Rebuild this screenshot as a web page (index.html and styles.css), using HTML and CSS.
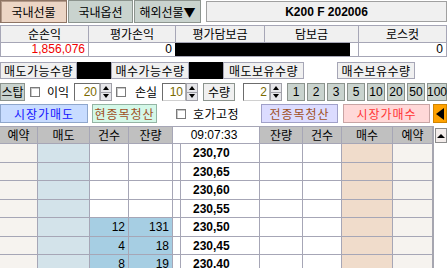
FILE: index.html
```html
<!DOCTYPE html>
<html lang="ko">
<head>
    <meta charset="UTF-8">
    <meta name="viewport" content="width=device-width, initial-scale=1.0">
    <title>선물 주문</title>
    <link rel="stylesheet" href="styles.css">
</head>
<body>

<div class="tabs">
    <div class="tab tab-on">국내선물</div>
    <div class="tab tab-off">국내옵션</div>
    <div class="tab tab-off tab-drop">해외선물▼</div>
    <div class="code">K200 F 202006</div>
</div>

<div class="summary">
    <div class="sh">순손익</div>
    <div class="sh">평가손익</div>
    <div class="sh">평가담보금</div>
    <div class="sh">담보금</div>
    <div class="sh">로스컷</div>
    <div class="sv loss">1,856,076</div>
    <div class="sv">0</div>
    <div class="sv masked"><span class="mask"></span></div>
    <div class="sv">0</div>
</div>

<div class="qtys">
    <div class="lbl lbl-a">매도가능수량</div>
    <div class="blk"></div>
    <div class="lbl lbl-b">매수가능수량</div>
    <div class="blk"></div>
    <div class="lbl lbl-c">매도보유수량</div>
    <div class="blank"></div>
    <div class="lbl lbl-d">매수보유수량</div>
</div>

<div class="opts">
    <div class="btn stop">스탑</div>
    <span class="chk chk-1"></span>
    <span class="opt-label">이익</span>
    <div class="spin spin-1">
        <span class="spin-val">20</span>
        <span class="spin-arr"><i class="up"></i><i class="down"></i></span>
    </div>
    <span class="chk chk-2"></span>
    <span class="opt-label loss-label">손실</span>
    <div class="spin spin-2">
        <span class="spin-val">10</span>
        <span class="spin-arr"><i class="up"></i><i class="down"></i></span>
    </div>
    <div class="btn qty-btn">수량</div>
    <div class="spin spin-3">
        <span class="spin-val">2</span>
        <span class="spin-arr"><i class="up"></i><i class="down"></i></span>
    </div>
    <div class="nums">
        <div class="btn num">1</div>
        <div class="btn num">2</div>
        <div class="btn num">3</div>
        <div class="btn num">5</div>
        <div class="btn num">10</div>
        <div class="btn num">20</div>
        <div class="btn num">50</div>
        <div class="btn num wide">100</div>
    </div>
</div>

<div class="orders">
    <div class="ord sell-mkt">시장가매도</div>
    <div class="ord clear-one">현종목청산</div>
    <span class="chk chk-3"></span>
    <span class="fix-label">호가고정</span>
    <div class="ord clear-all">전종목청산</div>
    <div class="ord buy-mkt">시장가매수</div>
    <div class="ord collapse"><i class="left"></i></div>
</div>

<div class="book">
    <div class="grid">
        <div class="hd">예약</div>
        <div class="hd">매도</div>
        <div class="hd">건수</div>
        <div class="hd">잔량</div>
        <div class="hd time">09:07:33</div>
        <div class="hd">잔량</div>
        <div class="hd">건수</div>
        <div class="hd">매수</div>
        <div class="hd">예약</div>

        <div class="c rs"></div><div class="c ask"></div><div class="c"></div><div class="c"></div><div class="c"></div><div class="c price">230,70</div><div class="c"></div><div class="c"></div><div class="c bid"></div><div class="c rs"></div>
        <div class="c rs"></div><div class="c ask"></div><div class="c"></div><div class="c"></div><div class="c"></div><div class="c price">230,65</div><div class="c"></div><div class="c"></div><div class="c bid"></div><div class="c rs"></div>
        <div class="c rs"></div><div class="c ask"></div><div class="c"></div><div class="c"></div><div class="c"></div><div class="c price">230,60</div><div class="c"></div><div class="c"></div><div class="c bid"></div><div class="c rs"></div>
        <div class="c rs"></div><div class="c ask"></div><div class="c"></div><div class="c"></div><div class="c"></div><div class="c price">230,55</div><div class="c"></div><div class="c"></div><div class="c bid"></div><div class="c rs"></div>
        <div class="c rs"></div><div class="c ask"></div><div class="c n hit">12</div><div class="c n hit">131</div><div class="c"></div><div class="c price">230,50</div><div class="c"></div><div class="c"></div><div class="c bid"></div><div class="c rs"></div>
        <div class="c rs"></div><div class="c ask"></div><div class="c n hit">4</div><div class="c n hit">18</div><div class="c"></div><div class="c price">230,45</div><div class="c"></div><div class="c"></div><div class="c bid"></div><div class="c rs"></div>
        <div class="c rs"></div><div class="c ask"></div><div class="c n hit">8</div><div class="c n hit">19</div><div class="c"></div><div class="c price">230,40</div><div class="c"></div><div class="c"></div><div class="c bid"></div><div class="c rs"></div>
    </div>
    <div class="scroll">
        <div class="scroll-up"><i class="up"></i></div>
    </div>
</div>

</body>
</html>
```

FILE: styles.css
```css
* {
    box-sizing: border-box;
}

body {
    margin: 0;
    width: 447px;
    height: 268px;
    overflow: hidden;
    background-color: #fff;
    font-family: "Noto Sans CJK KR", sans-serif;
    font-size: 12px;
    line-height: 14px;
    color: #000;
}

/* 상단 탭 */
.tabs {
    display: flex;
    height: 23px;
}

.tab {
    display: flex;
    align-items: center;
    justify-content: center;
    height: 23px;
    border: 1px solid #8c948e;
}

.tab-on {
    width: 67px;
    background-color: #ecd5c5;
    border-color: #8e7464;
    box-shadow: inset 1px 1px 0 #b39a8a;
}

.tab-off {
    width: 65px;
    margin-left: 1px;
    background-color: #c9d3ce;
}

.tab-drop {
    width: 67px;
    margin-left: 1px;
}

.code {
    flex: 1;
    margin-left: 5px;
    margin-top: 1px;
    height: 21px;
    display: flex;
    align-items: center;
    justify-content: center;
    background-color: #f0f0f0;
    border: 1px solid #a0a0a0;
    font-family: "Liberation Sans", sans-serif;
    font-weight: bold;
}

/* 손익 요약 */
.summary {
    margin-top: 2px;
    display: grid;
    grid-template-columns: 87px 86px 88px 93px 87px;
    grid-template-rows: 16px 13px;
    gap: 1px;
    padding: 1px;
    background-color: #a6a6b6;
}

.sh {
    background-color: #f0f0f0;
    text-align: center;
    line-height: 16px;
}

.sv {
    background-color: #fff;
    text-align: right;
    padding-right: 3px;
    font-family: "Liberation Sans", sans-serif;
    line-height: 13px;
}

.loss {
    color: #f00000;
}

.masked {
    grid-column: span 2;
    padding: 0;
    margin-left: -1px;
    text-align: left;
}

.mask {
    display: block;
    width: 175px;
    height: 13px;
    background-color: #000;
}

/* 수량 정보 */
.qtys {
    margin-top: 5px;
    display: flex;
    height: 17px;
}

.lbl {
    display: flex;
    align-items: center;
    justify-content: center;
    background-color: #f0f0f0;
    border: 1px solid #a6a6b6;
    letter-spacing: 0.5px;
}

.lbl-a { width: 77px; }
.lbl-b { width: 78px; }
.lbl-c { width: 81px; }
.lbl-d { width: 78px; }

.blk {
    width: 34px;
    background-color: #000;
}

.blank {
    width: 33px;
}

/* 스탑 옵션 */
.opts {
    margin-top: 4px;
    display: flex;
    align-items: center;
    height: 18px;
}

.btn {
    display: flex;
    align-items: center;
    justify-content: center;
    height: 18px;
    background-color: #c9d3ce;
    border: 1px solid #8c948e;
}

.stop {
    width: 25px;
}

.chk {
    width: 10px;
    height: 10px;
    background-color: #fff;
    border: 1px solid #7a7a7a;
    box-shadow: inset 1px 1px 0 #c8c8c8;
}

.chk-1 { margin-left: 5px; }
.chk-2 { margin-left: 4px; }

.opt-label {
    width: 27px;
    margin-left: 7px;
}

.loss-label {
    margin-left: 9px;
}

.spin {
    display: flex;
    height: 18px;
}

.spin-val {
    display: block;
    height: 18px;
    background-color: #fff;
    border: 1px solid #6c6c6c;
    border-right-color: #b0b0b0;
    border-bottom-color: #d0d0d0;
    text-align: right;
    padding-right: 2px;
    font-family: "Liberation Sans", sans-serif;
    line-height: 16px;
    color: #7a6a00;
}

.spin-1 .spin-val { width: 26px; }
.spin-2 .spin-val { width: 24px; }
.spin-3 .spin-val { width: 27px; }

.spin-3 {
    margin-left: 8px;
}

.spin-arr {
    display: flex;
    flex-direction: column;
    width: 12px;
    height: 18px;
    background-color: #e6e6ea;
    border: 1px solid #a0a0a8;
}

.spin-arr i {
    flex: 1;
    display: flex;
    align-items: center;
    justify-content: center;
}

.spin-arr i::before {
    content: "";
    border-left: 3px solid transparent;
    border-right: 3px solid transparent;
}

.spin-arr .up::before {
    border-bottom: 4px solid #000;
}

.spin-arr .down {
    border-top: 1px solid #a0a0a8;
}

.spin-arr .down::before {
    border-top: 4px solid #000;
}

.qty-btn {
    width: 32px;
    margin-left: 5px;
    background-color: #f0f0f0;
}

.nums {
    display: flex;
    gap: 2px;
    margin-left: 5px;
}

.num {
    width: 18px;
    font-family: "Liberation Sans", sans-serif;
}

.num.wide {
    width: 20px;
}

/* 주문 버튼 */
.orders {
    margin-top: 3px;
    display: flex;
    align-items: center;
    height: 19px;
}

.ord {
    display: flex;
    align-items: center;
    justify-content: center;
    height: 19px;
    border: 1px solid #9a9aa8;
    letter-spacing: 1px;
}

.sell-mkt {
    width: 88px;
    background-color: #c8dcff;
    border-color: #8ea6cc;
    color: #1414ff;
}

.clear-one {
    width: 65px;
    margin-left: 4px;
    background-color: #d4f8e8;
    border-color: #94b4a4;
    color: #a0501e;
}

.chk-3 {
    margin-left: 19px;
}

.fix-label {
    width: 68px;
    margin-left: 7px;
    letter-spacing: 0.5px;
}

.clear-all {
    width: 77px;
    background-color: #dcdcff;
    border-color: #a0a0c8;
    color: #a0501e;
}

.buy-mkt {
    width: 87px;
    margin-left: 5px;
    background-color: #ffd8d8;
    border-color: #c8a4a4;
    color: #ff3434;
}

.collapse {
    width: 14px;
    margin-left: 3px;
    background-color: #ffa200;
    border-color: #d08400;
}

.collapse .left {
    width: 0;
    height: 0;
    border-top: 6px solid transparent;
    border-bottom: 6px solid transparent;
    border-right: 8px solid #000;
}

/* 호가창 */
.book {
    margin-top: 3px;
    display: flex;
}

.grid {
    display: grid;
    grid-template-columns: 37px 51px 38px 43px 7px 78px 42px 38px 50px 39px;
    grid-template-rows: 16px 18px 17px 18px 17px 18px 17px 18px;
    gap: 1px;
    padding-top: 1px;
    background-color: #a6a6b6;
    width: 432px;
}

.hd {
    background-color: #c0c0c0;
    text-align: center;
    line-height: 16px;
}

.hd.time {
    grid-column: span 2;
    background-color: #fff;
    padding-right: 4px;
    font-family: "Liberation Sans", sans-serif;
}

.c {
    background-color: #fff;
}

.rs {
    background-color: #f6f3ef;
}

.ask {
    background-color: #d3e3ea;
}

.bid {
    background-color: #f0dccb;
}

.n {
    text-align: right;
    padding-right: 3px;
    font-family: "Liberation Sans", sans-serif;
    line-height: 18px;
}

.hit {
    background-color: #a6cee3;
}

.price {
    padding-left: 12px;
    font-family: "Liberation Sans", sans-serif;
    font-weight: bold;
    line-height: 18px;
}

.scroll {
    width: 15px;
    border-left: 2px solid #a6a6b0;
    padding: 2px 0 0 1px;
}

.scroll-up {
    width: 12px;
    height: 15px;
    display: flex;
    align-items: center;
    justify-content: center;
    background-color: #f2ecea;
    border: 1px solid #8c8c8c;
}

.scroll-up .up {
    width: 0;
    height: 0;
    border-left: 4px solid transparent;
    border-right: 4px solid transparent;
    border-bottom: 4px solid #000;
}
```
